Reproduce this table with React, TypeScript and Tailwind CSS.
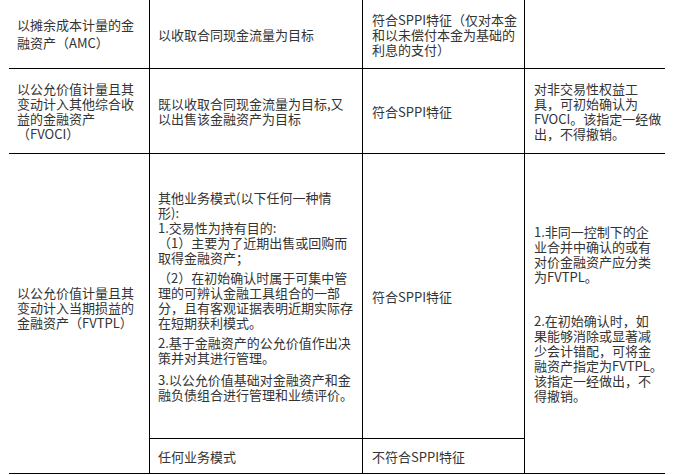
const font = { fontFamily: '"Noto Sans CJK SC", "Liberation Sans", sans-serif' };

function Lines({ lines, className = '' }: { lines: string[]; className?: string }) {
    return (
        <p className={className}>
            {lines.map((l, i) => (
                <span key={i} className="block whitespace-nowrap">
                    {l}
                </span>
            ))}
        </p>
    );
}

function Cell({ className = '', children }: { className?: string; children?: React.ReactNode }) {
    return <div className={`flex flex-col justify-center pl-2 border-black ${className}`}>{children}</div>;
}

export default function App() {
    return (
        <div className="w-[677px] h-[475px] bg-white overflow-hidden text-[13px] leading-[15px] text-[#333]" style={font}>
            <div className="ml-[9px] grid grid-cols-[141px_213px_162px_140px] grid-rows-[69px_85px_285px_35px]">
                {/* AMC */}
                <Cell className="border-r border-b">
                    <Lines className="leading-[18px]" lines={['以摊余成本计量的金', '融资产（AMC）']} />
                </Cell>
                <Cell className="border-r border-b">
                    <Lines lines={['以收取合同现金流量为目标']} />
                </Cell>
                <Cell className="border-r border-b pl-[9px]">
                    <Lines lines={['符合SPPI特征（仅对本金', '和以未偿付本金为基础的', '利息的支付）']} />
                </Cell>
                <Cell className="border-b" />

                {/* FVOCI */}
                <Cell className="border-r border-b">
                    <Lines lines={['以公允价值计量且其', '变动计入其他综合收', '益的金融资产', '（FVOCI）']} />
                </Cell>
                <Cell className="border-r border-b">
                    <Lines lines={['既以收取合同现金流量为目标,又', '以出售该金融资产为目标']} />
                </Cell>
                <Cell className="border-r border-b pl-[9px]">
                    <Lines lines={['符合SPPI特征']} />
                </Cell>
                <Cell className="border-b pl-[9px]">
                    <Lines lines={['对非交易性权益工', '具，可初始确认为', 'FVOCI。该指定一经做', '出，不得撤销。']} />
                </Cell>

                {/* FVTPL */}
                <Cell className="row-span-2 border-r border-b pb-[12px]">
                    <Lines lines={['以公允价值计量且其', '变动计入当期损益的', '金融资产（FVTPL）']} />
                </Cell>
                <Cell className="border-r border-b">
                    <Lines lines={['其他业务模式(以下任何一种情', '形):', '1.交易性为持有目的:', '（1）主要为了近期出售或回购而', '取得金融资产；']} />
                    <Lines className="mt-[5px]" lines={['（2）在初始确认时属于可集中管', '理的可辨认金融工具组合的一部', '分，且有客观证据表明近期实际存', '在短期获利模式。']} />
                    <Lines className="mt-[5px]" lines={['2.基于金融资产的公允价值作出决', '策并对其进行管理。']} />
                    <Lines className="mt-[7px]" lines={['3.以公允价值基础对金融资产和金', '融负债组合进行管理和业绩评价。']} />
                </Cell>
                <Cell className="border-r border-b pl-[9px]">
                    <Lines lines={['符合SPPI特征']} />
                </Cell>
                <Cell className="row-span-2 border-b pl-[9px]">
                    <Lines lines={['1.非同一控制下的企', '业合并中确认的或有', '对价金融资产应分类', '为FVTPL。']} />
                    <Lines className="mt-[29px]" lines={['2.在初始确认时，如', '果能够消除或显著减', '少会计错配，可将金', '融资产指定为FVTPL。', '该指定一经做出，不', '得撤销。']} />
                </Cell>
                <Cell className="border-r border-b">
                    <Lines lines={['任何业务模式']} />
                </Cell>
                <Cell className="border-r border-b pl-[9px]">
                    <Lines lines={['不符合SPPI特征']} />
                </Cell>
            </div>
        </div>
    );
}
